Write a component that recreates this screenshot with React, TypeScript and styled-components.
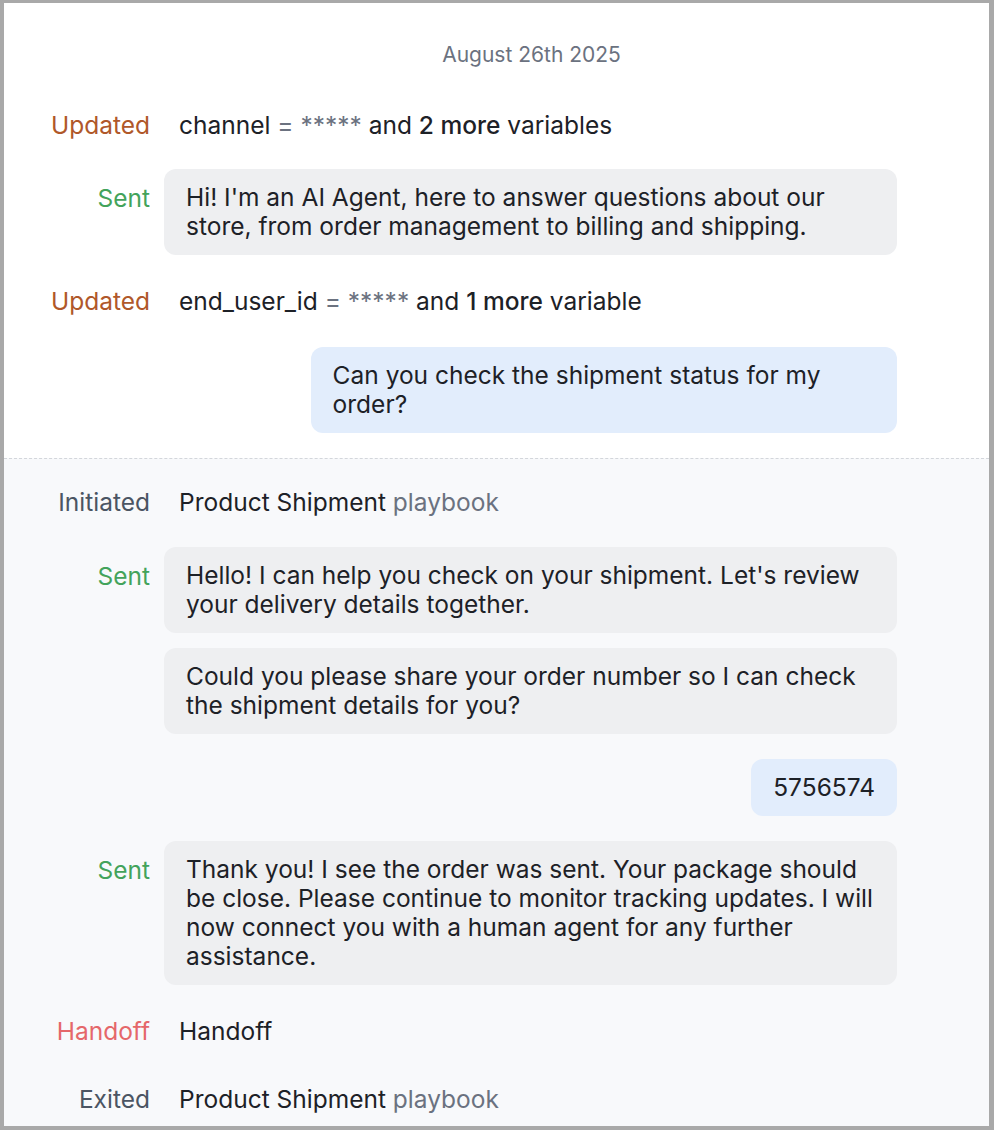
import React from "react";
import styled, { createGlobalStyle } from "styled-components";

const Global = createGlobalStyle`
  html, body {
    margin: 0;
    padding: 0;
    background: #ffffff;
  }
  body {
    font-family: Inter, "Noto Sans", "Liberation Sans", sans-serif;
    -webkit-font-smoothing: antialiased;
  }
`;

const Colors = {
  text: "#1d2127",
  muted: "#6b7280",
  label: "#4b5563",
  updated: "#b0582a",
  sent: "#43a35b",
  handoff: "#e5676a",
  agentBubble: "#eeeff1",
  userBubble: "#e2edfc",
  lowerBg: "#f8f9fb",
  frame: "#a9a9a9",
};

const FONT = "24.5px";

const Frame = styled.div`
  box-sizing: border-box;
  width: 994px;
  height: 1130px;
  overflow: hidden;
  display: flex;
  flex-direction: column;
  border-style: solid;
  border-color: ${Colors.frame};
  border-width: 3px 5px 4px 4px;
  background: #ffffff;
`;

const Section = styled.section<{ $tone: "white" | "grey" }>`
  display: flex;
  flex-direction: column;
  flex: ${p => (p.$tone === "grey" ? 1 : "none")};
  background: ${p => (p.$tone === "grey" ? Colors.lowerBg : "#ffffff")};
  padding: ${p => (p.$tone === "grey" ? "29px 0 0" : "38px 0 25px")};
  ${p => (p.$tone === "grey" ? "border-top: 1px dashed #d3d6db;" : "")}
`;

const DateLine = styled.div`
  text-align: center;
  font-size: 21px;
  line-height: 28px;
  color: ${Colors.muted};
  padding-left: 70px;
`;

const Row = styled.div<{ $top?: number }>`
  display: grid;
  grid-template-columns: 146px 733px;
  column-gap: 14px;
  margin-top: ${p => p.$top ?? 0}px;
  align-items: start;
`;

type Kind = "updated" | "sent" | "initiated" | "handoff" | "exited";

const kindColor: Record<Kind, string> = {
  updated: Colors.updated,
  sent: Colors.sent,
  initiated: Colors.label,
  handoff: Colors.handoff,
  exited: Colors.label,
};

const Label = styled.div<{ $kind?: Kind; $pad?: boolean }>`
  text-align: right;
  font-size: ${FONT};
  line-height: 29px;
  color: ${p => (p.$kind ? kindColor[p.$kind] : "transparent")};
  padding-top: ${p => (p.$pad ? 15 : 0)}px;
`;

const EventText = styled.div`
  font-size: ${FONT};
  line-height: 29px;
  color: ${Colors.text};
  padding-left: 15px;

  .mask,
  .dim {
    color: ${Colors.muted};
  }
  b {
    font-weight: 500;
  }
`;

const Bubbles = styled.div<{ $align?: "start" | "end" }>`
  display: flex;
  flex-direction: column;
  align-items: ${p => (p.$align === "end" ? "flex-end" : "stretch")};
  gap: 15px;
`;

const Bubble = styled.div<{ $from: "agent" | "user" }>`
  box-sizing: border-box;
  max-width: ${p => (p.$from === "user" ? "80%" : "100%")};
  padding: 14px 22px;
  border-radius: 12px;
  background: ${p => (p.$from === "user" ? Colors.userBubble : Colors.agentBubble)};
  color: ${Colors.text};
  font-size: ${FONT};
  line-height: 29px;
`;

const Event = ({
  kind,
  label,
  top,
  children,
}: {
  kind: Kind;
  label: string;
  top?: number;
  children: React.ReactNode;
}) => (
  <Row $top={top}>
    <Label $kind={kind}>{label}</Label>
    <EventText>{children}</EventText>
  </Row>
);

const AgentSays = ({ top, lines }: { top?: number; lines: string[] }) => (
  <Row $top={top}>
    <Label $kind="sent" $pad>
      Sent
    </Label>
    <Bubbles>
      {lines.map(l => (
        <Bubble key={l} $from="agent">
          {l}
        </Bubble>
      ))}
    </Bubbles>
  </Row>
);

const UserSays = ({ top, text }: { top?: number; text: string }) => (
  <Row $top={top}>
    <Label />
    <Bubbles $align="end">
      <Bubble $from="user">{text}</Bubble>
    </Bubbles>
  </Row>
);

export default function App() {
  return (
    <Frame>
      <Global />
      <Section $tone="white">
        <DateLine>August 26th 2025</DateLine>
        <Event kind="updated" label="Updated" top={42}>
          channel <span className="mask">= *****</span> and <b>2 more</b> variables
        </Event>
        <AgentSays
          top={29}
          lines={[
            "Hi! I'm an AI Agent, here to answer questions about our store, from order management to billing and shipping.",
          ]}
        />
        <Event kind="updated" label="Updated" top={32}>
          end_user_id <span className="mask">= *****</span> and <b>1 more</b> variable
        </Event>
        <UserSays top={31} text="Can you check the shipment status for my order?" />
      </Section>
      <Section $tone="grey">
        <Event kind="initiated" label="Initiated">
          Product Shipment <span className="dim">playbook</span>
        </Event>
        <AgentSays
          top={30}
          lines={[
            "Hello! I can help you check on your shipment. Let's review your delivery details together.",
            "Could you please share your order number so I can check the shipment details for you?",
          ]}
        />
        <UserSays top={25} text="5756574" />
        <AgentSays
          top={25}
          lines={[
            "Thank you! I see the order was sent. Your package should be close. Please continue to monitor tracking updates. I will now connect you with a human agent for any further assistance.",
          ]}
        />
        <Event kind="handoff" label="Handoff" top={32}>
          Handoff
        </Event>
        <Event kind="exited" label="Exited" top={39}>
          Product Shipment <span className="dim">playbook</span>
        </Event>
      </Section>
    </Frame>
  );
}
